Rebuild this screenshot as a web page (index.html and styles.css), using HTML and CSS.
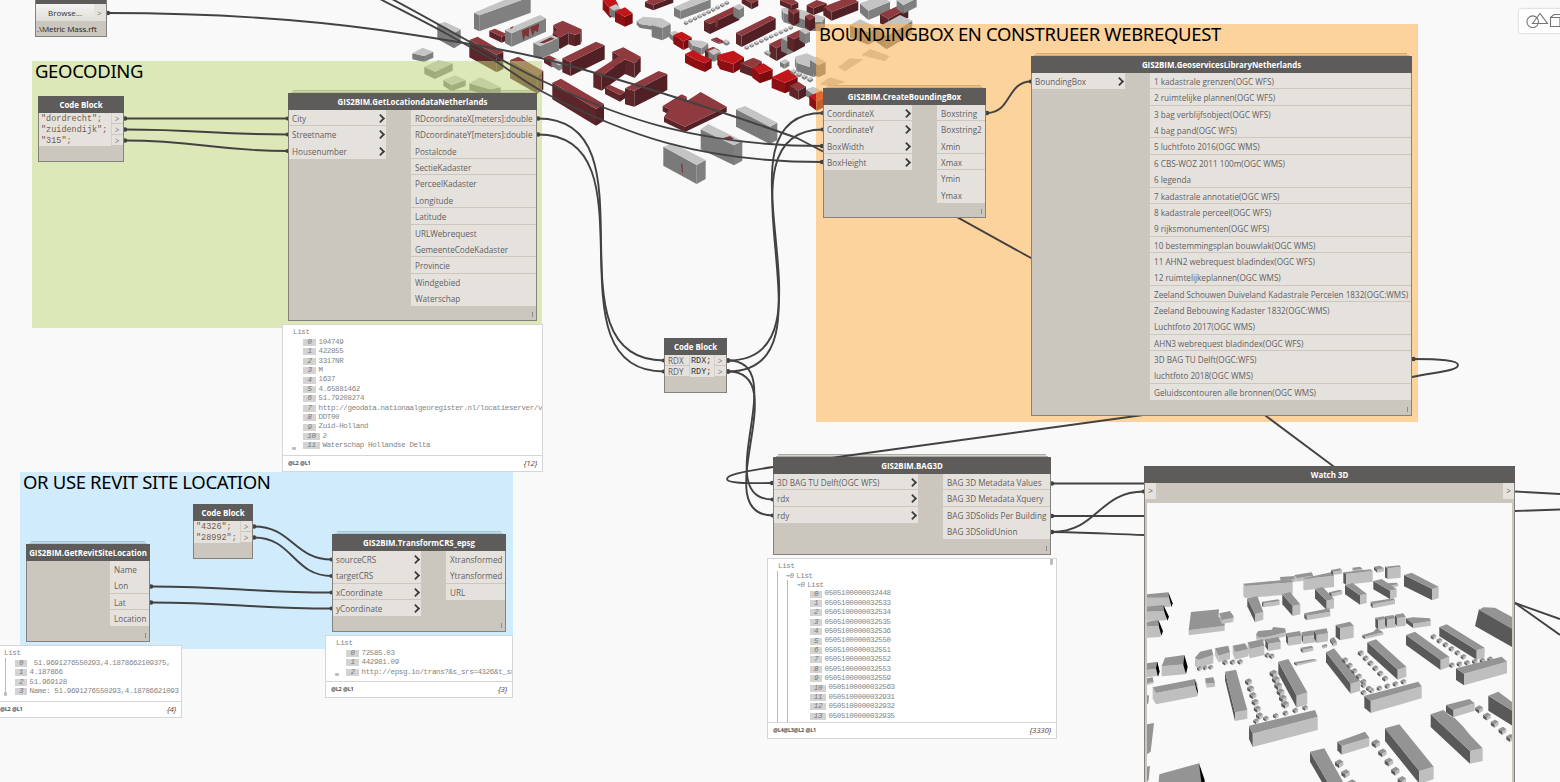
FILE: index.html
```html
<!DOCTYPE html>
<html lang="nl">
<head>
<meta charset="utf-8">
<title>GIS2BIM graph</title>
<link rel="stylesheet" href="styles.css">
</head>
<body>
<main class="workspace">
  <svg class="layer" width="1560" height="782"><g id="city" transform="translate(380 0) scale(.33333)"></g></svg>

  <section class="group g-geo"><h2>GEOCODING</h2></section>
  <section class="group g-site"><h2>OR USE REVIT SITE LOCATION</h2></section>
  <section class="group g-box"><h2>BOUNDINGBOX EN CONSTRUEER WEBREQUEST</h2></section>

  <svg class="layer wires" width="1560" height="782" id="wires">
    <path d="M108 13C210 13 300 19 380 30C450 40 520 52 560 63C640 85 740 118 797 138L823 151.500L958 217.700L1031 258L1266 416L1333 466L1515 603L1560 635"/>
    <path d="M1515 603L1560 619M1515 491.500L1560 494M1515 511L1560 509.500"/>
    <path d="M392 -1C420 14 445 28 470 42C497 57 520 71 547 83C620 118 700 146 823 146"/>
    <path d="M380 -1C405 12 425 22 447 34L497 62C512 72 525 82 543 92C625 135 700 162 823 162"/>
    <path d="M1413 359C1440 359 1458 360 1458 365C1458 371 1435 372 1412 377L1136 416L845 456L773 467C740 472 727 475 727 479C727 483 745 483.500 773 483"/>
    <path d="M1051 483.500H1144M1051 516H1144M1051 532C1080 532 1110 534 1144 535"/>
  </svg>

  <article class="node n-file">
    <div class="file-row"><button class="browse">Browse...</button><span class="out">&gt;</span></div>
    <p>.\Metric Mass.rft</p>
  </article>

  <article class="node code n-code1">
    <header>Code Block</header>
    <div class="line"><code>"dordrecht";</code><span class="out">&gt;</span></div>
    <div class="line"><code>"zuidendijk";</code><span class="out">&gt;</span></div>
    <div class="line"><code>"315";</code><span class="out">&gt;</span></div>
  </article>

  <article class="node stacked n-loc gap2">
    <header>GIS2BIM.GetLocationdataNetherlands</header>
    <div class="ports">
      <ul class="ins"><li>City</li><li>Streetname</li><li>Housenumber</li></ul>
      <ul class="outs"><li>RDcoordinateX[meters]:double</li><li>RDcoordinateY[meters]:double</li><li>Postalcode</li><li>SectieKadaster</li><li>PerceelKadaster</li><li>Longitude</li><li>Latitude</li><li>URLWebrequest</li><li>GemeenteCodeKadaster</li><li>Provincie</li><li>Windgebied</li><li>Waterschap</li></ul>
    </div>
    <i class="lacing"></i>
  </article>

  <article class="node stacked n-bbox gap2">
    <header>GIS2BIM.CreateBoundingBox</header>
    <div class="ports">
      <ul class="ins"><li>CoordinateX</li><li>CoordinateY</li><li>BoxWidth</li><li>BoxHeight</li></ul>
      <ul class="outs"><li>Boxstring</li><li>Boxstring2</li><li>Xmin</li><li>Xmax</li><li>Ymin</li><li>Ymax</li></ul>
    </div>
    <i class="lacing"></i>
  </article>

  <article class="node stacked n-lib gap3">
    <header>GIS2BIM.GeoservicesLibraryNetherlands</header>
    <div class="ports">
      <ul class="ins"><li>BoundingBox</li></ul>
      <ul class="outs"><li>1 kadastrale grenzen(OGC WFS)</li><li>2 ruimtelijke plannen(OGC WFS)</li><li>3 bag verblijfsobject(OGC WFS)</li><li>4 bag pand(OGC WFS)</li><li>5 luchtfoto 2016(OGC WMS)</li><li>6 CBS-WOZ 2011 100m(OGC WMS)</li><li>6 legenda</li><li>7 kadastrale annotatie(OGC WFS)</li><li>8 kadastrale perceel(OGC WFS)</li><li>9 rijksmonumenten(OGC WFS)</li><li>10 bestemmingsplan bouwvlak(OGC WMS)</li><li>11 AHN2 webrequest bladindex(OGC WFS)</li><li>12 ruimtelijkeplannen(OGC WMS)</li><li>Zeeland Schouwen Duiveland Kadastrale Percelen 1832(OGC:WMS)</li><li>Zeeland Bebouwing Kadaster 1832(OGC:WMS)</li><li>Luchtfoto 2017(OGC WMS)</li><li>AHN3 webrequest bladindex(OGC WFS)</li><li>3D BAG TU Delft(OGC:WFS)</li><li>luchtfoto 2018(OGC WMS)</li><li>Geluidscontouren alle bronnen(OGC WMS)</li></ul>
    </div>
    <i class="lacing"></i>
  </article>

  <article class="node code n-code2">
    <header>Code Block</header>
    <div class="line"><code>"4326";</code><span class="out">&gt;</span></div>
    <div class="line"><code>"28992";</code><span class="out">&gt;</span></div>
  </article>

  <article class="node code n-code3">
    <header>Code Block</header>
    <div class="line"><span class="in">RDX</span><code>RDX;</code><span class="out">&gt;</span></div>
    <div class="line"><span class="in">RDY</span><code>RDY;</code><span class="out">&gt;</span></div>
  </article>

  <article class="node stacked n-site gap1">
    <header>GIS2BIM.GetRevitSiteLocation</header>
    <div class="ports">
      <ul class="ins"></ul>
      <ul class="outs"><li>Name</li><li>Lon</li><li>Lat</li><li>Location</li></ul>
    </div>
    <i class="lacing"></i>
  </article>

  <article class="node stacked n-crs gap1">
    <header>GIS2BIM.TransformCRS_epsg</header>
    <div class="ports">
      <ul class="ins"><li>sourceCRS</li><li>targetCRS</li><li>xCoordinate</li><li>yCoordinate</li></ul>
      <ul class="outs"><li>Xtransformed</li><li>Ytransformed</li><li>URL</li></ul>
    </div>
    <i class="lacing"></i>
  </article>

  <article class="node stacked n-bag gap3">
    <header>GIS2BIM.BAG3D</header>
    <div class="ports">
      <ul class="ins"><li>3D BAG TU Delft(OGC WFS)</li><li>rdx</li><li>rdy</li></ul>
      <ul class="outs"><li>BAG 3D Metadata Values</li><li>BAG 3D Metadata Xquery</li><li>BAG 3DSolids Per Building</li><li>BAG 3DSolidUnion</li></ul>
    </div>
    <i class="lacing"></i>
  </article>

  <article class="node n-watch">
    <header>Watch 3D</header>
    <div class="watch-ports"><span>&gt;</span><span>&gt;</span></div>
    <svg class="view" viewBox="51 144 1095 840" width="365" height="280"><g id="watch"></g></svg>
  </article>

  <aside class="preview p-loc">
    <div class="tree">
      <div class="root">List</div>
      <ol><li><b>0</b>104749</li><li><b>1</b>422855</li><li><b>2</b>3317NR</li><li><b>3</b>M</li><li><b>4</b>1637</li><li><b>5</b>4.65881462</li><li><b>6</b>51.79208274</li><li><b>7</b>http://geodata.nationaalgeoregister.nl/locatieserver/v</li><li><b>8</b>DDT00</li><li><b>9</b>Zuid-Holland</li><li><b class="two">10</b>2</li><li><b class="two">11</b>Waterschap Hollandse Delta</li></ol>
      <i class="grip"></i>
    </div>
    <footer><span>@L2 @L1</span><em>{<u>12</u>}</em></footer>
  </aside>

  <aside class="preview p-site">
    <div class="tree">
      <div class="root">List</div>
      <ol><li><b>0</b>&nbsp;51.9691276550293,4.1878662109375,</li><li><b>1</b>4.187866</li><li><b>2</b>51.969128</li><li><b>3</b>Name: 51.9691276550293,4.18786621093</li></ol>
      <i class="rail"></i>
      <i class="grip"></i>
    </div>
    <footer><span>@L2 @L1</span><em>{<u>4</u>}</em></footer>
  </aside>

  <aside class="preview p-crs">
    <div class="tree">
      <div class="root">List</div>
      <ol><li><b>0</b>72585.03</li><li><b>1</b>442981.09</li><li><b>2</b>http://epsg.io/trans?&amp;s_srs=4326&amp;t_sr</li></ol>
      <i class="grip"></i>
    </div>
    <footer><span>@L2 @L1</span><em>{<u>3</u>}</em></footer>
  </aside>

  <aside class="preview p-bag">
    <div class="tree">
      <div class="root">List</div>
      <div class="branch lvl1"><i class="arrow"></i><s>0</s> List</div>
      <div class="branch lvl2"><i class="arrow"></i><s>0</s> List</div>
      <ol><li><b>0</b>0505100000032448</li><li><b>1</b>0505100000032533</li><li><b>2</b>0505100000032534</li><li><b>3</b>0505100000032535</li><li><b>4</b>0505100000032536</li><li><b>5</b>0505100000032550</li><li><b>6</b>0505100000032551</li><li><b>7</b>0505100000032552</li><li><b>8</b>0505100000032553</li><li><b>9</b>0505100000032559</li><li><b class="two">10</b>0505100000032563</li><li><b class="two">11</b>0505100000032931</li><li><b class="two">12</b>0505100000032932</li><li><b class="two">13</b>0505100000032935</li></ol>
      <i class="rail"></i><i class="rail inner"></i><i class="thumb"></i>
    </div>
    <footer><span>@L4@L3@L2 @L1</span><em>{<u>3330</u>}</em></footer>
  </aside>

  <div class="toolbar">
    <svg width="42" height="24" viewBox="1519 9 42 24" fill="none" stroke="#757575" stroke-width="1.1"><circle cx="1532.700" cy="21.700" r="5.800"/><path d="M1540 13.500L1532.500 23.500H1547.500ZM1550.500 17.500H1560V26.500H1550.500ZM1550.500 17.500L1554 14.500H1562"/></svg>
  </div>
</main>
<script src="scene.js"></script>
</body>
</html>
```
FILE: styles.css
```css
* { box-sizing: border-box; margin: 0; padding: 0; }
body { width: 1560px; height: 782px; overflow: hidden; background: #f9f9f9; font-family: "Open Sans", "Noto Sans", sans-serif; }
ul, ol { list-style: none; }
.workspace { position: relative; width: 1560px; height: 782px; overflow: hidden; }
.layer { position: absolute; left: 0; top: 0; }
.wires path { fill: none; stroke: #424242; stroke-width: 1.9; }
.wires circle { fill: #424242; }

.group { position: absolute; padding: 0 3px; }
.group h2 { font: 400 18.5px/20px "Noto Sans", "Open Sans", sans-serif; color: #000; white-space: nowrap; letter-spacing: -.35px; }
.g-geo { left: 32px; top: 61px; width: 510px; height: 267px; background: rgba(193, 216, 124, .52); }
.g-site { left: 20px; top: 472px; width: 493px; height: 177px; background: rgba(170, 224, 255, .52); }
.g-box { left: 816px; top: 24px; width: 602px; height: 398px; background: rgba(255, 174, 72, .52); }

.node { position: absolute; border: 1px solid #85827e; background: #cbc6be; color: #626060; font-size: 8.17px; }
.node header { height: 17px; margin: -1px -1px 0; background: #5e5c5a; color: #fff; font-weight: 700; font-size: 7.9px; line-height: 19px; text-align: center; white-space: nowrap; }
.stacked::before, .stacked::after { content: ""; position: absolute; background: #d6d4cf; border-top: 1px solid #aaa9a5; z-index: -1; }
.stacked::before { left: 4px; right: 4px; top: -4px; height: 3px; }
.stacked::after { left: 2px; right: 2px; top: -2px; height: 2px; }
.ports { display: flex; justify-content: space-between; }
.ports li { height: 16.36px; line-height: 17px; white-space: nowrap; background: #e5e2de; border-bottom: 1px solid #cbc6be; }
.ins { width: var(--in); }
.outs { width: var(--out); }
.ins li { padding-left: 3px; position: relative; }
.outs li { padding-left: 4px; }
.gap1 li:nth-child(3n+1), .gap2 li:nth-child(3n+2), .gap3 li:nth-child(3n), .ports li:last-child { border-bottom-color: #e5e2de; }
.ins li::after { content: ""; position: absolute; right: 2.5px; top: 5px; width: 5px; height: 5px; border: solid #3c3c3c; border-width: 2px 2px 0 0; transform: rotate(45deg) scale(.9); }
.lacing { position: absolute; right: 3px; bottom: 3px; width: 1.5px; height: 5px; background: #8c8a8c; }

.n-loc { left: 288px; top: 93px; width: 249px; height: 228px; --in: 97px; --out: 125px; }
.n-bbox { left: 823px; top: 88px; width: 163px; height: 130px; --in: 88px; --out: 48px; }
.n-lib { left: 1031px; top: 56px; width: 381px; height: 360px; --in: 93px; --out: 261px; }
.n-site { left: 26px; top: 544px; width: 124px; height: 98px; --in: 0px; --out: 39px; }
.n-crs { left: 332px; top: 534px; width: 174px; height: 98px; --in: 88px; --out: 59px; }
.n-bag { left: 773px; top: 457px; width: 278px; height: 98px; --in: 144px; --out: 107px; }

.code .line { display: flex; height: 11px; line-height: 11px; background: #e5e2de; }
.code code { flex: 1; padding-left: 2px; font: 8.5px/13px "Liberation Mono", monospace; color: #735c48; white-space: pre; }
.out { width: 12px; height: 11px; padding-right: 1px; text-align: center; border-left: 1px solid #d3cfc9; border-bottom: 1px solid #cbc6be; color: #777; }
.code .in { width: 25px; padding-left: 3px; border-right: 1px solid #d3cfc9; border-bottom: 1px solid #cbc6be; }
.n-code1 { left: 38px; top: 96px; width: 86px; height: 66px; }
.n-code2 { left: 193px; top: 504px; width: 60px; height: 55px; }
.n-code3 { left: 664px; top: 338px; width: 63px; height: 55px; }
.n-code3 code { color: #333; padding-left: 1px; }

.n-file { left: 35px; top: -12px; width: 72px; height: 49px; color: #222; border-top: 16px solid #5e5c5a; font-size: 8px; }
.file-row { display: flex; height: 17px; background: #e5e2de; line-height: 16px; }
.file-row .out { height: 16px; border: 0; line-height: 17px; }
.browse { flex: 1; border: 0; background: linear-gradient(#f4f3f2, #e0deda); font: 8px/16px "Open Sans", sans-serif; color: #333; }
.n-file p { line-height: 15px; padding-left: 1px; white-space: nowrap; letter-spacing: -.07px; }

.n-watch { left: 1144px; top: 466px; width: 371px; height: 330px; padding: 0; }
.watch-ports { display: flex; justify-content: space-between; height: 16px; margin-bottom: 4px; }
.watch-ports span { width: 11px; background: #e5e2de; text-align: center; line-height: 16px; }
.view { display: block; margin-left: 2px; background: #f9f9f9; }

.preview { position: absolute; display: flex; flex-direction: column; background: #fff; border: 1px solid #d6d6d6; font: 7.5px/9.4px "Liberation Mono", monospace; letter-spacing: -.36px; color: #858585; overflow: hidden; }
.tree { position: relative; flex: 1; overflow: hidden; padding: 3.4px 0 0 10px; }
.root { height: 9.4px; }
.tree ol { padding-left: 10px; }
.tree li { height: 9.42px; white-space: pre; }
.tree b { display: inline-block; width: 13px; height: 7px; margin: 0 2.5px 0 0; vertical-align: top; position: relative; top: 1.2px; line-height: 7px; font-weight: 400; font-style: italic; text-align: center; background: #d3d3d3; color: #777; }
.tree b.two { width: 17px; }
.preview footer { height: 16px; flex: none; border-top: 1px solid #d6d6d6; display: flex; justify-content: space-between; padding: 0 5px; line-height: 14px; }
.preview footer span { font: 700 5.5px/15px "Open Sans", sans-serif; letter-spacing: -.3px; word-spacing: .6px; color: #555; }
.preview footer em { font: italic 8px/14px "Open Sans", sans-serif; letter-spacing: -.3px; color: #444; }
.preview footer u { text-decoration: none; color: #7b3a30; }
.grip { position: absolute; left: 8.500px; bottom: 5px; width: 4px; height: 3px; background: #bdbdbd; border-radius: 1px; }
.rail { position: absolute; left: 9px; top: 12px; bottom: 0; width: 1px; background: #bbb; }
.p-loc { left: 282px; top: 324px; width: 261px; height: 148px; }
.p-site { left: -8px; top: 645px; width: 190px; height: 73px; }
.p-site .tree { padding-left: 11px; }
.p-site .tree ol { padding-left: 11px; }
.p-site .tree b { width: 12px; }
.p-site .rail { left: 11.500px; bottom: 6px; }
.p-site .grip { left: 10.500px; width: 3px; height: 4px; }
.p-site footer { padding-left: 7px; }
.p-crs { left: 325px; top: 635px; width: 188px; height: 63px; }
.p-bag { left: 767px; top: 558px; width: 290px; height: 181px; }
.p-bag .tree ol { padding-left: 32px; }
.p-bag .tree b { width: 12px; }
.p-bag .tree b.two { width: 16px; }
.branch { height: 8.8px; white-space: pre; }
.branch s { text-decoration: none; font-style: italic; letter-spacing: -2px; }
.lvl1 { padding-left: 7.5px; }
.lvl2 { padding-left: 18.5px; }
.arrow { display: inline-block; border: 2.5px solid transparent; border-top-color: #7fb2dc; border-bottom: 0; margin-bottom: 1px; }
.p-bag .rail.inner { left: 19px; top: 21px; }
.thumb { position: absolute; right: 3px; top: 0; width: 3px; height: 6px; border-radius: 0 0 2px 2px; background: #bdbdbd; }

.toolbar { position: absolute; left: 1519px; top: 9px; width: 60px; height: 24px; background: #fff; border-radius: 2px; box-shadow: 0 0 2px rgba(0, 0, 0, .35); }
.toolbar svg { display: block; }
```
FILE: scene.js
```js
const NS = 'http://www.w3.org/2000/svg';

function add(parent, tag, attrs) {
  const el = document.createElementNS(NS, tag);
  for (const k in attrs) el.setAttribute(k, attrs[k]);
  parent.appendChild(el);
}

// roof, face seen on the left, face seen on the right
const skins = {
  r: ['#8e3a3f', '#5c2529', '#512024'],
  b: ['#c3161b', '#8c0f13', '#7a0c10'],
  g: ['#c4c4c4', '#7a7a7a', '#808080'],
  w: ['#949494', '#595959', '#bfbfbf'],
  l: ['#949494', '#bfbfbf', '#bfbfbf']
};

const parse = s => s.split(' ').map(p => p.split(',').map(Number));

// Extrudes a roof outline downwards by h
function prism(g, skin, outline, h) {
  let p = parse(outline);
  const area = p.reduce((a, q, i) => { const n = p[(i + 1) % p.length]; return a + q[0] * n[1] - n[0] * q[1]; }, 0);
  if (area < 0) p = p.reverse();
  const c = skins[skin];
  const faces = [];
  p.forEach((q, i) => {
    const n = p[(i + 1) % p.length];
    if (n[0] < q[0]) faces.push({ l: n, r: q, y: Math.min(n[1], q[1]) });
  });
  faces.sort((a, b) => a.y - b.y);
  faces.forEach(f => add(g, 'polygon', {
    points: [f.l, f.r, [f.r[0], f.r[1] + h], [f.l[0], f.l[1] + h]].join(' '),
    fill: f.r[1] > f.l[1] + 3 ? c[1] : c[2]
  }));
  add(g, 'polygon', { points: p.join(' '), fill: c[0] });
}

function sheds(g, skin, x1, y1, x2, y2, n, s) {
  for (let i = 0; i < n; i++) {
    const x = x1 + (x2 - x1) * i / (n - 1), y = y1 + (y2 - y1) * i / (n - 1);
    prism(g, skin, `${x - s / 2},${y - s * .2} ${x + s * .1},${y - s * .5} ${x + s * .55},${y - s * .2} ${x},${y + s * .15}`, s * .45);
  }
}

const city = document.getElementById('city');
[
  ['g', '282,38 420,-20 452,-10 298,46', 48], ['g', '172,72 195,66 242,88 222,100', 45],
  ['r', '328,92 345,86 382,103 365,110', 18], ['g', '375,90 480,45 498,55 395,100', 40],
  ['g', '97,160 128,143 160,155 132,168', 18], ['g', '133,200 175,180 218,190 165,215', 22],
  ['g', '190,240 225,226 257,240 215,255', 18], ['g', '268,250 300,232 325,243 362,262 330,268', 20],
  ['r', '520,75 548,62 605,88 602,98 585,104 565,98 540,112 518,100 532,88', 35],
  ['g', '460,128 515,105 537,114 480,138', 38],
  ['r', '268,120 293,110 370,155 350,165', 52], ['r', '390,180 415,170 490,213 472,226', 55],
  ['r', '492,172 508,166 532,178 515,186', 16], ['g', '515,182 530,176 552,188 537,196', 16],
  ['r', '547,175 648,125 674,136 572,186', 42],
  ['r', '697,155 730,142 782,170 764,190 735,178 665,228 640,218 718,168', 44],
  ['r', '675,262 690,255 735,275 720,285', 20], ['r', '735,265 836,213 862,222 763,272', 48],
  ['r', '517,248 543,236 672,312 648,327', 50],
  ['r', '848,318 905,283 920,290 908,302 925,300 962,276 1040,320 915,380 852,350 868,328', 16],
  ['g', '1068,328 1095,318 1192,368 1170,380', 52], ['g', '962,388 985,372 1087,422 1062,436', 60],
  ['g', '850,440 880,430 977,480 950,495', 57],
  ['g', '770,62 790,50 845,55 870,70 820,78 780,72', 12], ['g', '815,75 840,62 872,72 847,85', 36],
  ['b', '668,0 705,-5 715,15 690,25', 28], ['g', '688,22 708,12 722,25 700,32', 22], ['b', '705,35 735,22 758,40 735,50', 30],
  ['r', '795,5 850,-20 880,-8 820,15', 16], ['g', '882,22 965,-15 992,-2 902,32', 26],
  ['r', '1085,-8 1110,-20 1135,0 1115,10', 18], ['r', '972,62 1060,20 1078,30 990,72', 30], ['g', '1060,20 1078,11 1092,20 1077,30', 28],
  ['r', '1068,98 1170,47 1187,55 1085,108', 33],
  ['g', '1205,25 1240,22 1335,52 1325,66 1290,64 1210,38', 28], ['r', '1225,28 1242,24 1258,32 1240,42', 36], ['r', '1275,48 1290,42 1305,50 1290,60', 34],
  ['r', '1168,132 1205,114 1225,124 1190,145', 38], ['g', '1203,115 1222,107 1242,118 1225,126', 38], ['r', '1222,107 1258,90 1275,100 1242,118', 38], ['g', '1258,90 1272,84 1290,95 1275,102', 30],
  ['r', '1200,0 1230,-8 1255,8 1235,15', 15], ['r', '1280,15 1310,0 1340,10 1300,25', 20],
  ['g', '868,98 885,92 900,100 882,110', 16], ['b', '880,105 905,95 935,112 910,124', 26],
  ['g', '925,120 965,122 985,130 965,145 935,135', 20], ['r', '975,150 1000,140 1018,150 992,162', 22], ['g', '985,153 1005,145 1022,155 1000,166', 20],
  ['b', '915,162 940,150 965,166 995,178 975,190 945,178', 26],
  ['b', '1012,165 1060,152 1092,172 1060,192 1020,180', 28], ['r', '1080,190 1120,173 1145,184 1120,205', 26],
  ['b', '1117,205 1150,190 1178,208 1140,222', 28], ['b', '1175,232 1225,208 1253,232 1215,248', 32],
  ['r', '1228,258 1255,245 1278,260 1255,272', 28], ['g', '1278,268 1300,260 1330,275 1300,282', 20], ['b', '1288,288 1325,272 1335,292 1310,304', 28],
  ['g', '1245,170 1280,160 1330,182 1330,195 1300,205 1250,188', 26], ['g', '1200,185 1215,177 1228,184 1213,192', 14],
  ['r', '993,118 1010,112 1035,125 1015,128', 3], ['g', '1290,180 1310,170 1337,186 1315,196', 36],
  ['r', '1330,20 1410,-10 1435,5 1355,36', 26], ['g', '1440,10 1500,-12 1530,5 1465,32', 28], ['r', '1500,42 1560,15 1585,25 1525,56', 28],
  ['g', '1410,75 1440,58 1490,82 1465,96', 38], ['g', '1488,85 1560,45 1597,62 1520,108', 40], ['g', '1550,0 1590,-15 1610,-5 1570,15', 26],
  ['g', '1445,165 1470,147 1528,168 1515,182', 1], ['g', '1375,200 1410,175 1447,178 1395,213', 1], ['g', '1320,252 1350,232 1395,245 1360,258', 1]
].forEach(b => prism(city, ...b));
sheds(city, 'g', 918, 68, 1040, 8, 10, 13);
sheds(city, 'g', 1100, 142, 1232, 82, 10, 13);
sheds(city, 'g', 1240, 215, 1290, 238, 4, 16);
sheds(city, 'g', 1160, 157, 1165, 160, 2, 14);
sheds(city, 'g', 1037, 126, 1040, 128, 2, 16);

// Red patches where grey and red solids overlap
['425,92 448,82 446,112 436,106 430,124', '450,82 478,70 474,96 464,92 458,108', '478,128 512,112 524,116 492,130',
 '1030,414 1050,408 1062,416 1040,420', '903,492 907,490 909,516 906,520', '1005,60 1015,55 1013,80 1007,84',
 '392,82 400,79 398,84 390,87'].forEach(points => add(city, 'polygon', { points, fill: '#7c3438' }));

const watch = document.getElementById('watch');
[
  ['l', '450,366 495,363 497,372 452,376', 8], ['l', '493,360 545,352 550,362 500,370', 10],
  ['l', '340,386 485,373 488,382 345,393', 36], ['w', '520,370 610,350 612,362 525,372', 34],
  ['w', '603,345 630,340 636,346 610,350', 10], ['l', '667,338 690,335 698,342 670,346', 8],
  ['w', '640,352 722,343 728,348 648,357', 32], ['w', '732,335 750,332 762,340 742,344', 9],
  ['w', '765,335 808,331 812,336 773,340', 32], ['w', '822,360 845,353 926,395 907,402', 34],
  ['w', '352,430 382,424 400,470 375,478', 24], ['w', '396,440 445,433 449,438 400,445', 12],
  ['w', '457,418 480,411 511,448 488,453', 30], ['w', '597,412 630,404 637,408 605,416', 10], ['w', '555,402 578,396 612,432 590,437', 28],
  ['w', '645,390 668,384 710,416 690,421', 28], ['w', '770,385 800,383 805,388 780,392', 6], ['w', '730,378 755,372 800,402 780,407', 25],
  ['w', '722,440 790,430 795,435 728,448', 12], ['w', '523,475 597,460 601,470 530,482', 14],
  ['l', '183,471 267,463 265,485 283,490 284,512 176,526', 15], ['l', '268,475 300,468 311,484 308,490 275,494', 12],
  ['l', '51,418 115,412 120,428 51,428', 28], ['l', '51,455 100,450 108,468 51,470', 28], ['l', '51,500 85,495 92,512 51,514', 34],
  ['w', '617,510 660,500 671,512 630,520', 36], ['w', '600,552 612,546 621,562 610,566', 8], ['w', '577,570 590,567 592,572 580,576', 5],
  ['l', '378,538 385,528 425,524 430,516 465,520 468,532 415,545 385,548', 12],
  ['l', '195,608 210,590 245,582 250,600 205,615', 25], ['l', '255,580 295,572 300,592 265,602', 20], ['l', '308,572 345,565 355,582 315,592', 22],
  ['l', '353,562 398,553 403,572 360,582', 28], ['w', '406,553 445,546 452,560 415,566', 22], ['w', '468,535 510,528 514,542 475,548', 24],
  ['w', '515,532 550,526 557,540 520,545', 22], ['w', '552,526 590,520 594,535 560,540', 24],
  ['w', '512,578 545,572 550,578 518,585', 9], ['w', '492,622 550,612 560,614 500,627', 5],
  ['l', '105,608 163,600 165,628 95,634', 30], ['l', '51,625 82,620 86,640 51,645', 22], ['l', '51,670 68,667 71,680 51,685', 5],
  ['l', '68,697 195,672 203,690 78,714', 34], ['l', '225,670 250,667 255,683 230,686', 12],
  ['w', '285,650 318,644 352,765 315,772', 26], ['w', '445,620 475,612 532,712 500,722', 36],
  ['w', '712,562 738,553 829,635 803,644', 30], ['w', '588,592 612,580 690,678 662,686', 30],
  ['w', '828,540 855,530 958,605 932,615', 30], ['w', '928,516 950,508 1064,578 1040,586', 28],
  ['w', '736,488 762,484 770,492 745,496', 28], ['w', '765,484 790,480 798,490 772,494', 26], ['w', '795,479 820,475 827,486 802,489', 26],
  ['w', '828,490 850,487 900,490 902,498 850,506', 14], ['w', '697,540 730,530 740,520 760,532 705,545', 7],
  ['w', '948,750 1018,732 1034,745 970,765', 22], ['w', '902,778 940,765 960,782 975,790 1000,815 1020,840 1058,880 1020,888', 38],
  ['w', '622,860 705,830 718,848 635,873', 26], ['w', '765,820 808,808 911,935 868,948', 38],
  ['w', '540,890 583,880 650,1000 610,1010', 30], ['w', '1075,722 1105,710 1160,752 1160,775', 45],
  ['l', '88,958 207,925 218,990 85,990', 5]
].forEach(b => prism(watch, ...b));
[[355, 680, 388, 782, 6, 20], [430, 655, 465, 748, 6, 22], [378, 798, 525, 758, 6, 16], [692, 594, 765, 670, 6, 17],
 [645, 615, 700, 680, 5, 17], [700, 712, 820, 680, 6, 16], [910, 545, 1000, 605, 6, 16], [965, 630, 1080, 612, 6, 16],
 [1047, 762, 1140, 848, 5, 22], [737, 865, 815, 975, 5, 24], [627, 925, 665, 985, 3, 24], [208, 640, 242, 636, 3, 14],
 [285, 622, 330, 620, 3, 16], [412, 600, 425, 603, 2, 16], [700, 690, 716, 700, 2, 16]].forEach(s => sheds(watch, 'w', ...s));
[
  ['w', '357,812 555,765 563,785 368,836', 40], ['w', '703,722 865,680 875,694 722,738', 36], ['w', '978,640 1115,605 1131,620 1002,656', 35]
].forEach(b => prism(watch, ...b));
[
  ['#000', '115,412 128,445 124,457 118,430'], ['#000', '100,450 117,485 112,497 103,470'], ['#000', '85,495 99,528 94,542 87,515'],
  ['#000', '163,600 173,635 168,658 160,630'], ['#000', '82,620 89,650 84,665 78,640'], ['#000', '193,672 203,705 203,718 197,695'],
  ['#000', '207,925 224,975 224,990 215,990'], ['#595959', '1047,463 1146,520 1146,576 1035,513'],
  ['#949494', '1047,465 1060,457 1095,458 1146,486 1146,522'], ['#949494', '51,808 72,804 62,890 51,898'], ['#949494', '51,720 57,722 55,745 51,748'], ['#949494', '51,935 60,932 56,975 51,980']
].forEach(([fill, points]) => add(watch, 'polygon', { fill, points }));

const wires = document.getElementById('wires');
[
  [125, 118.5, 288, 118.5], [125, 129.5, 288, 134.5], [125, 140.5, 288, 151],
  [538, 118.5, 664, 360.5], [538, 134.5, 664, 371.5],
  [728, 360.5, 823, 113], [728, 371.5, 823, 129.5], [728, 360.5, 773, 499.5], [728, 371.5, 773, 515.5],
  [987, 113, 1031, 81.5], [254, 526.5, 332, 559.5], [254, 537.5, 332, 576],
  [151, 586.5, 332, 592.5], [151, 602.5, 332, 608.5], [1052, 532, 1144, 491.5]
].forEach(([a, b, c, d]) => {
  const k = .45 * Math.hypot(c - a, d - b);
  add(wires, 'path', { d: `M${a} ${b}C${a + k} ${b} ${c - k} ${d} ${c} ${d}` });
  add(wires, 'circle', { cx: a, cy: b, r: 2.3 });
  add(wires, 'circle', { cx: c - .5, cy: d, r: 2 });
});
[[108, 13], [822, 146], [822, 162], [1413.500, 359], [772, 483], [1052, 483.500], [1052, 516]].forEach(([cx, cy]) => add(wires, 'circle', { cx, cy, r: 2.2 }));
```
